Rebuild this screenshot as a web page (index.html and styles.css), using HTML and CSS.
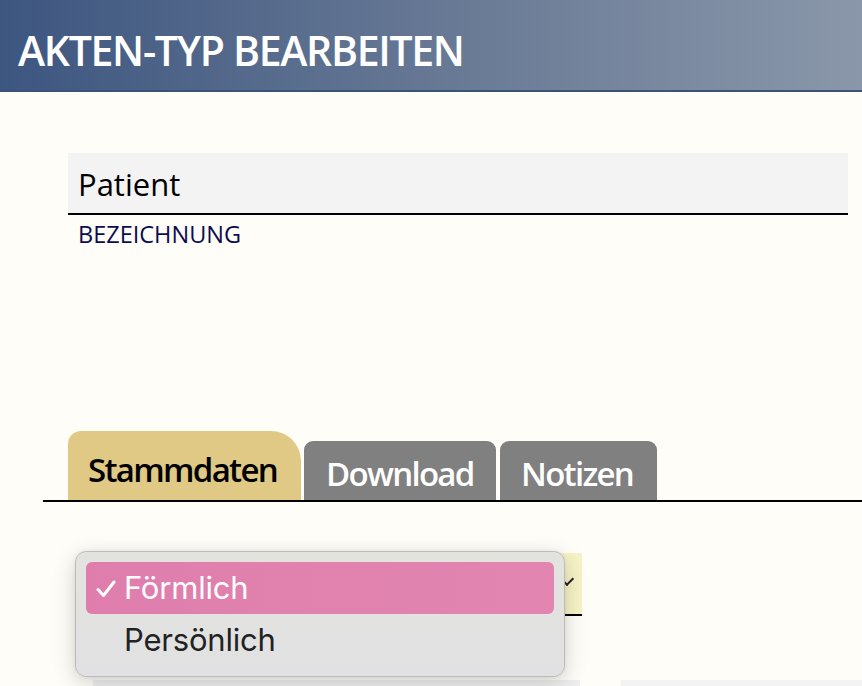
FILE: index.html
```html
<!DOCTYPE html>
<html lang="de">
<head>
<meta charset="utf-8">
<title>Akten-Typ bearbeiten</title>
<link rel="stylesheet" href="styles.css">
</head>
<body>
<header class="header">
  <h1 class="title">AKTEN-TYP BEARBEITEN</h1>
</header>
<main class="main">
  <section class="panel">
    <div class="panel-head">Patient</div>
    <div class="panel-label">BEZEICHNUNG</div>
  </section>
  <nav class="tabs">
    <div class="tab tab-active">Stammdaten</div>
    <div class="tab tab-dl">Download</div>
    <div class="tab tab-no">Notizen</div>
  </nav>
  <div class="form">
    <div class="select-wrap">
      <div class="select"><span class="chev"></span></div>
      <div class="popup">
        <div class="opt opt-sel"><svg class="check" width="20" height="18" viewBox="0 0 20 18"><path d="M2 9.5 L7.5 15.5 L18 2" fill="none" stroke="#fff" stroke-width="3" stroke-linecap="round" stroke-linejoin="round"/></svg>Förmlich</div>
        <div class="opt">Persönlich</div>
      </div>
    </div>
    <div class="rows">
      <div class="row row-a"></div>
      <div class="row row-b"></div>
    </div>
  </div>
</main>
</body>
</html>
```
FILE: styles.css
```css
html, body {
  margin: 0;
  padding: 0;
}
body {
  background: #fffdf8;
  font-family: "Open Sans", "Noto Sans", sans-serif;
  width: 862px;
  height: 686px;
  overflow: hidden;
}
.header {
  height: 90px;
  border-bottom: 2px solid #3a5379;
  background: linear-gradient(90deg, #3d5680 0%, #6a7b96 55%, #8a97aa 100%);
  display: flex;
  align-items: center;
  padding-left: 18px;
}
.title {
  margin: 0;
  color: #fff;
  font-weight: 600;
  font-size: 41px;
  letter-spacing: -1.3px;
  padding-top: 10px;
}
.main {
  display: flex;
  flex-direction: column;
}
.panel {
  margin: 61px 14px 0 68px;
}
.panel-head {
  height: 60px;
  background: #f3f3f3;
  border-bottom: 2px solid #000;
  padding-left: 10px;
  font-size: 31px;
  font-weight: 500;
  line-height: 62px;
  color: #000;
}
.panel-label {
  padding-left: 10px;
  margin-top: 4px;
  font-size: 23.5px;
  font-weight: 500;
  color: #0c0c50;
  line-height: 30px;
}
.tabs {
  margin: 182px 0 0 43px;
  padding-left: 25px;
  border-bottom: 2px solid #000;
  display: flex;
  align-items: flex-end;
  gap: 3px;
}
.tab {
  height: 59px;
  background: #808080;
  color: #fff;
  border-radius: 9px 9px 0 0;
  font-size: 33px;
  font-weight: 600;
  letter-spacing: -1.7px;
  line-height: 66px;
  box-sizing: border-box;
}
.tab-dl {
  width: 192px;
  padding-left: 22px;
}
.tab-no {
  width: 157px;
  margin-left: 1px;
  padding-left: 21px;
}
.tab-active {
  width: 233px;
  height: 69px;
  background: #dfc985;
  color: #000;
  border-radius: 13px 30px 0 0;
  line-height: 78px;
  padding-left: 20px;
}
.form {
  padding: 51px 0 0 93px;
}
.select-wrap {
  position: relative;
  width: 489px;
}
.select {
  height: 61px;
  background: #f6f3c6;
  border-bottom: 2px solid #000;
  position: relative;
}
.chev {
  position: absolute;
  right: 10px;
  top: 21px;
  width: 8px;
  height: 8px;
  border-right: 2px solid #222;
  border-bottom: 2px solid #222;
  transform: rotate(45deg);
}
.popup {
  position: absolute;
  left: -18px;
  top: -2px;
  width: 468px;
  height: 104px;
  padding: 10px;
  border: 1px solid #bcbcbc;
  border-radius: 11px;
  background: linear-gradient(180deg, #e3e3de 0%, #e1e1e3 100%);
  box-shadow: 0 6px 22px rgba(0, 0, 0, 0.18), 0 0 4px rgba(0, 0, 0, 0.06);
  font-family: Inter, Roboto, sans-serif;
  font-size: 31px;
  letter-spacing: -0.2px;
}
.opt {
  height: 52px;
  line-height: 52px;
  padding-left: 38px;
  color: #222;
  border-radius: 6px;
  position: relative;
}
.opt-sel {
  background: linear-gradient(90deg, #df7eac 0%, #e285b1 100%);
  color: #fff;
}
.check {
  position: absolute;
  left: 10px;
  top: 18px;
}
.rows {
  display: flex;
  margin-top: 64px;
  gap: 41px;
}
.row {
  height: 20px;
  background: #efefef;
}
.row-a {
  width: 487px;
}
.row-b {
  flex: 1;
  background: #f3f3f3;
}
```
